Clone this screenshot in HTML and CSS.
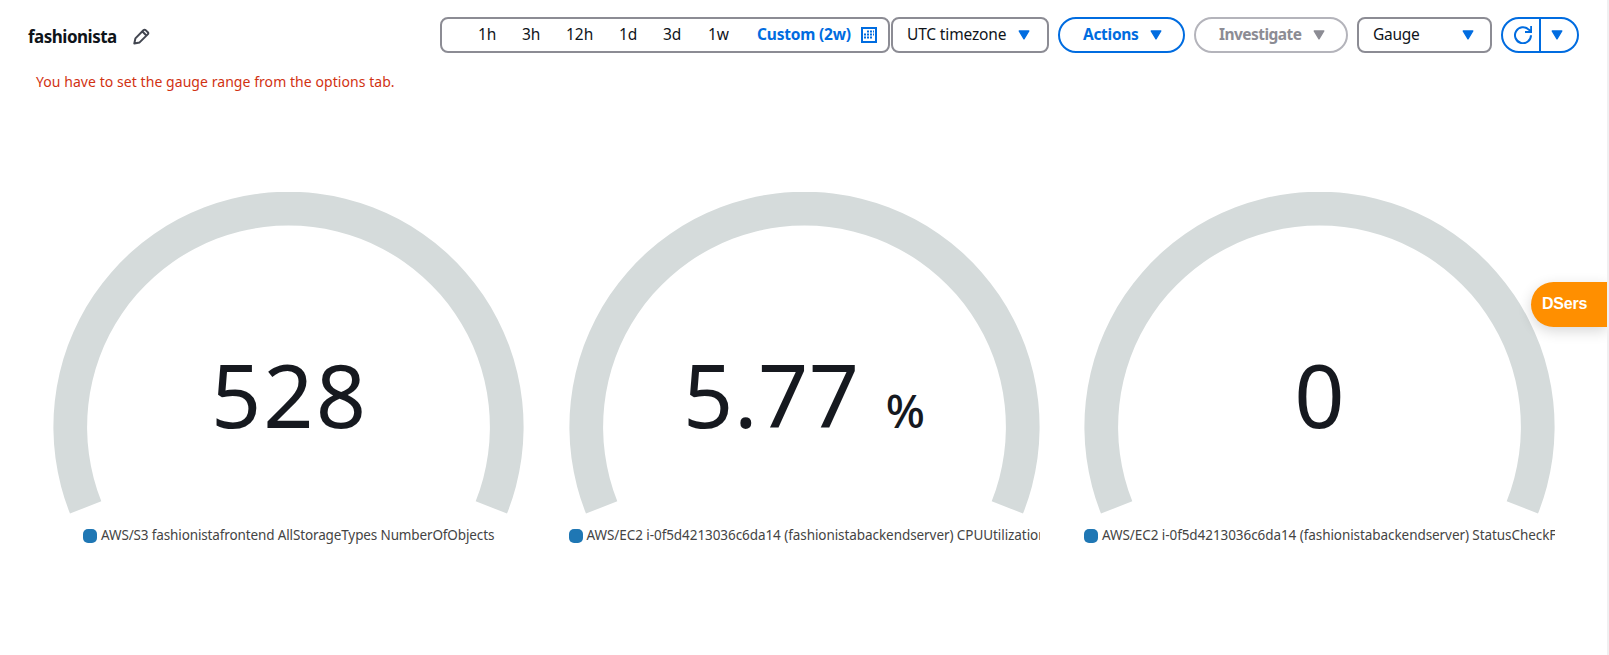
FILE: index.html
```html
<!DOCTYPE html>
<html lang="en">
<head>
<meta charset="utf-8">
<title>fashionista</title>
<link rel="stylesheet" href="styles.css">
</head>
<body>
<svg class="defs" width="0" height="0">
  <symbol id="caret" viewBox="0 0 12 10"><path d="M1.2 1h9.6L6 8.8z" fill="currentColor" stroke="currentColor" stroke-width="1.4" stroke-linejoin="round"/></symbol>
  <symbol id="arc" viewBox="0 0 471 323"><path d="M17 321.6A235.1 235.1 0 1 1 454 321.6L422.7 309.2A201.4 201.4 0 1 0 48.3 309.2Z" fill="#d5dbdb"/></symbol>
</svg>
<main class="page">
  <header class="bar">
    <h1 class="title">fashionista</h1>
    <svg class="pencil" width="17" height="17" viewBox="0 0 17 17" fill="none" stroke="#424650" stroke-width="2" stroke-linejoin="round"><path d="M1.3 15.5L2.4 10.4L10.4 2.3Q11.5 1.2 12.6 2.1L14.8 4.2Q15.8 5.3 14.7 6.4L6.6 14.4ZM9.5 3.5L13.3 7.5"/></svg>
    <div class="range box">
      <span class="r1">1h</span><span class="r2">3h</span><span class="r3">12h</span><span class="r4">1d</span><span class="r5">3d</span><span class="r6">1w</span><b class="custom">Custom (2w)</b>
      <svg class="calendar" width="16" height="16" viewBox="0 0 16 16"><path d="M1 1h14v14H1z" fill="none" stroke="currentColor" stroke-width="2"/><path d="M6 3.5h2v2H6zM9 3.5h2v2H9zM12 3.5h1v2H12zM3 6.5h2v2H3zM6 6.5h2v2H6zM9 6.5h2v2H9zM12 6.5h1v2H12zM3 9.5h2v2H3zM6 9.5h2v2H6zM9 9.5h2v2H9z" fill="currentColor"/></svg>
    </div>
    <div class="zone box"><span>UTC timezone</span><svg class="caret"><use href="#caret"/></svg></div>
    <div class="actions box pill"><b>Actions</b><svg class="caret"><use href="#caret"/></svg></div>
    <div class="investigate box pill"><b>Investigate</b><svg class="caret"><use href="#caret"/></svg></div>
    <div class="type box"><span>Gauge</span><svg class="caret"><use href="#caret"/></svg></div>
    <div class="refresh box pill">
      <div class="reload"><svg width="18" height="18" viewBox="0 0 18 18" fill="none" stroke="currentColor" stroke-width="2"><path d="M17 9.2A8 8 0 1 1 14.7 3.6L17 5.6M17.2 0V6H11"/></svg></div>
      <div class="more"><svg class="caret"><use href="#caret"/></svg></div>
    </div>
  </header>
  <p class="error">You have to set the gauge range from the options tab.</p>
  <section class="gauges">
    <article class="gauge">
      <div class="dial"><svg class="arc"><use href="#arc"/></svg><div class="value">528</div></div>
      <div class="legend short"><i class="swatch"></i><span>AWS/S3 fashionistafrontend AllStorageTypes NumberOfObjects</span></div>
    </article>
    <article class="gauge">
      <div class="dial"><svg class="arc"><use href="#arc"/></svg><div class="value decimal">5.77<span class="unit">%</span></div></div>
      <div class="legend"><i class="swatch"></i><span>AWS/EC2 i-0f5d4213036c6da14 (fashionistabackendserver) CPUUtilization</span></div>
    </article>
    <article class="gauge">
      <div class="dial"><svg class="arc"><use href="#arc"/></svg><div class="value">0</div></div>
      <div class="legend"><i class="swatch"></i><span>AWS/EC2 i-0f5d4213036c6da14 (fashionistabackendserver) StatusCheckFailed</span></div>
    </article>
  </section>
</main>
<div class="dsers">DSers</div>
</body>
</html>
```
FILE: styles.css
```css
* { box-sizing: border-box; }
body { margin: 0; background: #fff; font-family: "Noto Sans", "Open Sans", sans-serif; color: #0f141a; overflow: hidden; }
.defs { position: absolute; }
.page { height: 655px; border-right: 2px solid #f0f0f1; }
.bar { display: flex; padding: 17px 0 0 28px; height: 70px; font-size: 15.5px; line-height: 31px; white-space: nowrap; }
.title { margin: 5px 0 0; width: 105px; font-size: 17px; line-height: 30px; font-weight: 700; letter-spacing: -0.5px; }
.pencil { margin-top: 11px; flex: none; }
.box { display: flex; height: 36px; border: 2px solid #8c8c94; border-radius: 8px; flex: none; color: #0f141a; }
.box span, .box b { flex: none; }
.box b { font-weight: 700; letter-spacing: -0.2px; }
.caret { width: 12px; height: 10px; color: #006ce0; flex: none; margin-top: 11px; }
.range { width: 450px; margin-left: 290px; padding-left: 36px; }
.r1 { width: 44px; }
.r2 { width: 44px; }
.r3 { width: 53px; }
.r4 { width: 44px; }
.r5 { width: 45px; }
.r6 { width: 49px; }
.custom { width: 104px; color: #006ce0; }
.calendar { color: #006ce0; margin-top: 8px; }
.zone { width: 158px; margin-left: 1px; padding-left: 14px; }
.zone span { width: 111px; letter-spacing: -0.15px; }
.pill { border-radius: 18px; border-color: #006ce0; color: #006ce0; }
.actions { width: 127px; margin-left: 9px; padding-left: 23px; }
.actions b { width: 67px; letter-spacing: -0.3px; }
.investigate { width: 154px; margin-left: 9px; padding-left: 23px; border-color: #b4b4bb; color: #8c8c94; }
.investigate b { width: 94px; letter-spacing: -0.55px; }
.investigate .caret { color: #8c8c94; }
.type { width: 135px; margin-left: 9px; padding-left: 14px; }
.type span { width: 89px; letter-spacing: -0.3px; }
.refresh { width: 78px; margin-left: 9px; }
.reload { width: 38px; border-right: 2px solid #006ce0; padding: 7px 0 0 11px; line-height: 0; }
.more { padding-left: 10px; line-height: 0; }
.more .caret { display: block; }
.error { margin: 0 0 0 36px; height: 24px; font-size: 14px; line-height: 24px; letter-spacing: 0.06px; color: #d13212; white-space: nowrap; }
.gauges { display: flex; gap: 44.5px; margin: 97px 0 0 53px; }
.gauge { width: 471px; flex: none; }
.dial { display: grid; height: 324px; padding-top: 1px; }
.arc { grid-area: 1 / 1; width: 471px; height: 323px; }
.value { grid-area: 1 / 1; margin-top: 142px; padding-left: 2px; height: 120px; line-height: 120px; font-size: 88px; color: #16191f; text-align: center; letter-spacing: 2px; white-space: nowrap; }
.decimal { padding-left: 0; letter-spacing: 0.5px; }
.unit { font-size: 46px; font-weight: 500; margin-left: 26px; letter-spacing: 0; }
.legend { display: flex; height: 24px; margin-top: 8px; font-size: 13.5px; line-height: 24px; color: #444; overflow: hidden; white-space: nowrap; letter-spacing: -0.07px; }
.short { padding-left: 30px; letter-spacing: -0.13px; }
.swatch { width: 14px; height: 14px; margin: 6px 4px 0 0; border-radius: 5px; background: #1f77b4; flex: none; }
.legend span { flex: none; }
.dsers { position: absolute; right: 2px; top: 282px; width: 76px; height: 45px; padding-left: 11px; border-radius: 23px 0 0 23px; background: #ff8f00; color: #fff; font: bold 16px/43px "Liberation Sans", sans-serif; letter-spacing: -0.2px; box-shadow: 0 4px 14px rgba(0, 0, 0, .16); clip-path: inset(-30px 0 -30px -30px); }
```
